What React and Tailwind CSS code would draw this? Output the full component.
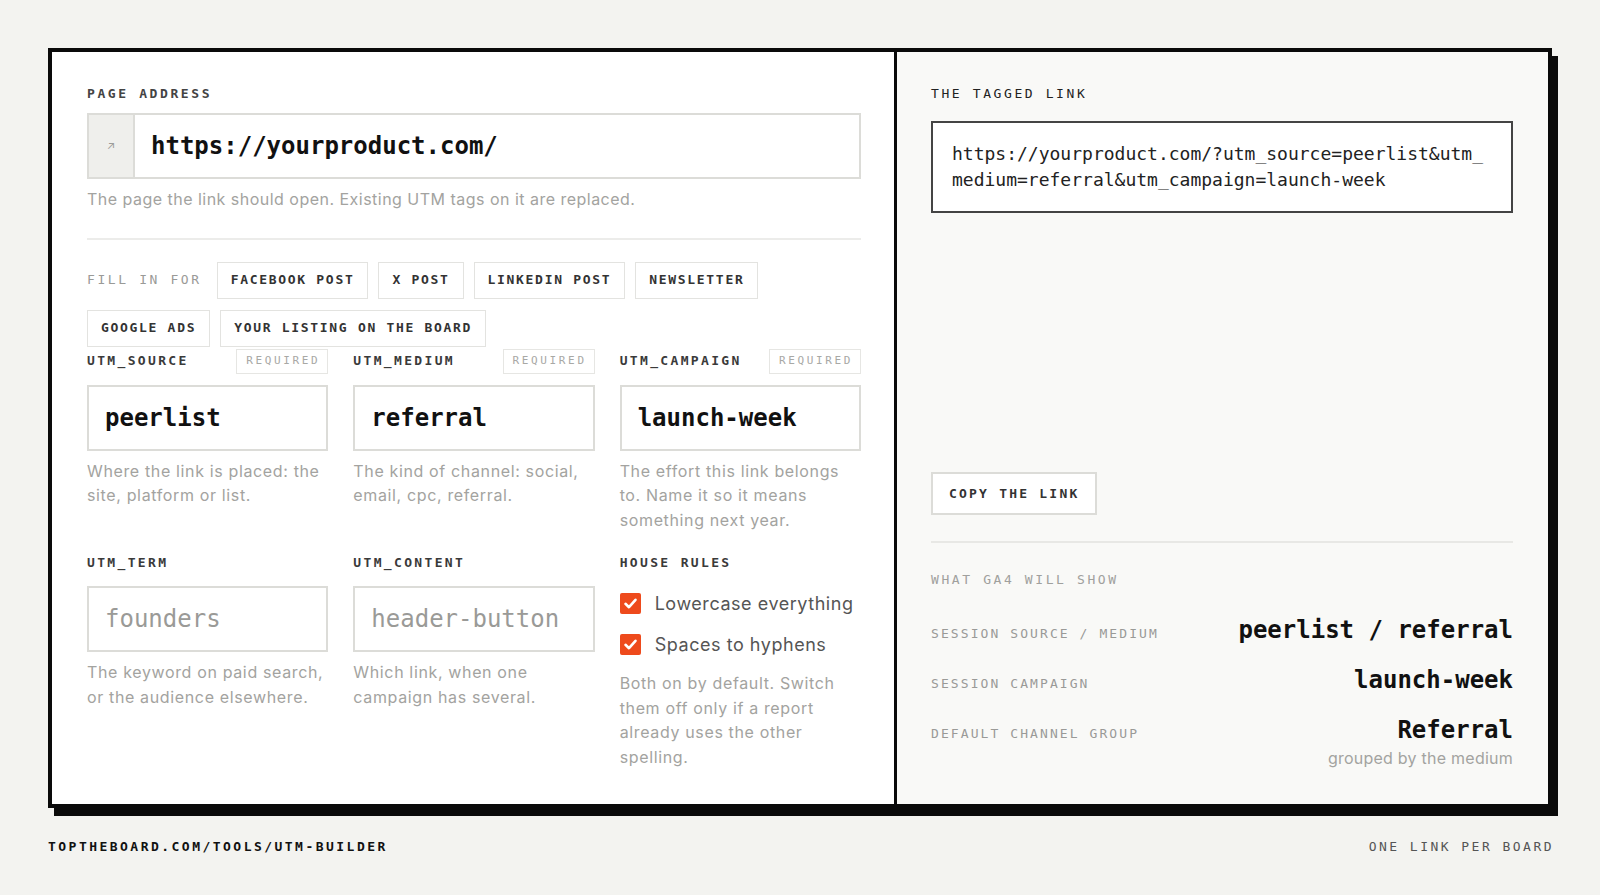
import React from 'react';

const mono = { fontFamily: '"DejaVu Sans Mono", "Liberation Mono", monospace' };
const sans = { fontFamily: 'Inter, "Noto Sans", sans-serif' };

const presets = ['FACEBOOK POST', 'X POST', 'LINKEDIN POST', 'NEWSLETTER', 'GOOGLE ADS', 'YOUR LISTING ON THE BOARD'];

function Check() {
  return (
    <svg width="21" height="21" viewBox="0 0 21 21" className="shrink-0">
      <rect x="0" y="0" width="21" height="21" rx="2" fill="#ee4a1c" />
      <path d="M5.5 10.8 L9 14.2 L15.5 6.8" fill="none" stroke="#fff" strokeWidth="2.6" strokeLinecap="round" strokeLinejoin="round" />
    </svg>
  );
}

function Field({ label, required, value, placeholder, help }) {
  return (
    <div className="flex flex-col">
      <div className="h-[25px] flex items-center justify-between">
        <span style={mono} className="text-[13px] font-bold tracking-[0.18em] text-[#3a3a3a]">{label}</span>
        {required && (
          <span style={mono} className="h-[25px] flex items-center pl-[9px] pr-[7px] border-[1.5px] border-[#e6e6e3] text-[11px] tracking-[0.24em] text-[#a8a8a5]">
            REQUIRED
          </span>
        )}
      </div>
      <div className="mt-[11px] h-[66px] border-2 border-[#dcdcd8] bg-white flex items-center pl-[16px]">
        {value ? (
          <span style={mono} className="text-[24px] font-bold text-[#111]">{value}</span>
        ) : (
          <span style={mono} className="text-[24px] text-[#9a9a97]">{placeholder}</span>
        )}
      </div>
      <p className="mt-2 text-[16px] leading-[24.5px] tracking-[0.04em] text-[#a3a3a0]" style={sans}>{help}</p>
    </div>
  );
}

function GaRow({ label, value, note, first }) {
  return (
    <div className={first ? 'mt-[26px]' : 'mt-[18px]'}>
      <div className="flex items-baseline justify-between">
        <span style={mono} className="text-[13px] tracking-[0.16em] text-[#9a9a97]">{label}</span>
        <span style={mono} className="text-[24px] leading-[32px] font-bold text-[#111]">{value}</span>
      </div>
      {note && (
        <div className="mt-[2px] text-right text-[16px] leading-[20px] tracking-[0.015em] text-[#a3a3a0]" style={sans}>{note}</div>
      )}
    </div>
  );
}

export default function App() {
  return (
    <div className="min-h-screen bg-[#f3f3f0] px-[48px] pt-[48px]" style={sans}>
      <div className="border-4 border-[#0a0a0a] shadow-[6px_8px_0_#0a0a0a] grid grid-cols-[845px_1fr]">
        {/* left: the form */}
        <div className="bg-white border-r-[3px] border-[#0a0a0a] pl-[35px] pr-[33px] pt-[34px] pb-[35px]">
          <div style={mono} className="text-[13px] leading-4 font-bold tracking-[0.2em] text-[#444]">PAGE ADDRESS</div>
          <div className="mt-[11px] h-[66px] border-2 border-[#dcdcd8] flex">
            <div className="w-[46px] bg-[#efefec] border-r-2 border-[#dcdcd8] flex items-center justify-center text-[11px] text-[#9a9a97]">↗</div>
            <div className="flex items-center pl-[16px]">
              <span style={mono} className="text-[24px] font-bold text-[#111]">https://yourproduct.com/</span>
            </div>
          </div>
          <p className="mt-2 text-[16px] leading-[24.5px] tracking-[0.03em] text-[#a3a3a0]">
            The page the link should open. Existing UTM tags on it are replaced.
          </p>
          <div className="mt-[26px] h-[2px] bg-[#ececea]" />

          <div className="mt-[22px] flex flex-wrap items-center gap-x-[10px] gap-y-[11px]">
            <span style={mono} className="mr-[5px] text-[13px] tracking-[0.2em] text-[#9a9a97]">FILL IN FOR</span>
            {presets.map((p) => (
              <span key={p} style={mono} className="h-[37px] flex items-center pl-[13px] pr-[13px] border-[1.5px] border-[#e3e3e0] bg-white text-[13px] font-bold tracking-[0.13em] text-[#333]">
                {p}
              </span>
            ))}
          </div>

          <div className="mt-[2px] grid grid-cols-3 gap-x-[25px] gap-y-[18px]">
            <Field label="UTM_SOURCE" required value="peerlist" help="Where the link is placed: the site, platform or list." />
            <Field label="UTM_MEDIUM" required value="referral" help="The kind of channel: social, email, cpc, referral." />
            <Field label="UTM_CAMPAIGN" required value="launch-week" help="The effort this link belongs to. Name it so it means something next year." />
            <Field label="UTM_TERM" placeholder="founders" help="The keyword on paid search, or the audience elsewhere." />
            <Field label="UTM_CONTENT" placeholder="header-button" help="Which link, when one campaign has several." />
            <div className="flex flex-col">
              <div className="h-[25px] flex items-center">
                <span style={mono} className="text-[13px] font-bold tracking-[0.18em] text-[#3a3a3a]">HOUSE RULES</span>
              </div>
              <label className="mt-[14px] h-[28px] flex items-center gap-[14px] text-[18px] tracking-[0.03em] text-[#555]">
                <Check />
                Lowercase everything
              </label>
              <label className="mt-[13px] h-[28px] flex items-center gap-[14px] text-[18px] tracking-[0.03em] text-[#555]">
                <Check />
                Spaces to hyphens
              </label>
              <p className="mt-[13px] text-[16px] leading-[24.5px] tracking-[0.04em] text-[#a3a3a0]">
                Both on by default. Switch them off only if a report already uses the other spelling.
              </p>
            </div>
          </div>
        </div>

        {/* right: the result */}
        <div className="bg-[#f9f9f7] pl-[34px] pr-[35px] pt-[34px] pb-[36px] flex flex-col">
          <div style={mono} className="text-[13px] leading-4 tracking-[0.2em] text-[#222]">THE TAGGED LINK</div>
          <div className="mt-[19px] border-2 border-[#444] bg-white px-[19px] py-[18px]">
            <p style={mono} className="text-[18px] leading-[26px] text-[#222] break-all">
              https://yourproduct.com/?utm_source=peerlist&amp;utm_medium=referral&amp;utm_campaign=launch-week
            </p>
          </div>

          <div className="mt-auto">
            <button style={mono} className="h-[43px] px-[16px] border-2 border-[#dcdcd8] bg-white text-[13px] font-bold tracking-[0.17em] text-[#333]">
              COPY THE LINK
            </button>
            <div className="mt-[26px] h-[2px] bg-[#e8e8e5]" />
            <div style={mono} className="mt-[29px] text-[13px] leading-4 tracking-[0.2em] text-[#a0a09d]">WHAT GA4 WILL SHOW</div>
            <GaRow first label="SESSION SOURCE / MEDIUM" value="peerlist / referral" />
            <GaRow label="SESSION CAMPAIGN" value="launch-week" />
            <GaRow label="DEFAULT CHANNEL GROUP" value="Referral" note="grouped by the medium" />
          </div>
        </div>
      </div>

      <div className="mt-[31px] flex justify-between">
        <span style={mono} className="text-[13px] leading-4 font-bold tracking-[0.19em] text-[#111]">TOPTHEBOARD.COM/TOOLS/UTM-BUILDER</span>
        <span style={mono} className="text-[13px] leading-4 tracking-[0.19em] text-[#555] -mr-[2px]">ONE LINK PER BOARD</span>
      </div>
    </div>
  );
}
